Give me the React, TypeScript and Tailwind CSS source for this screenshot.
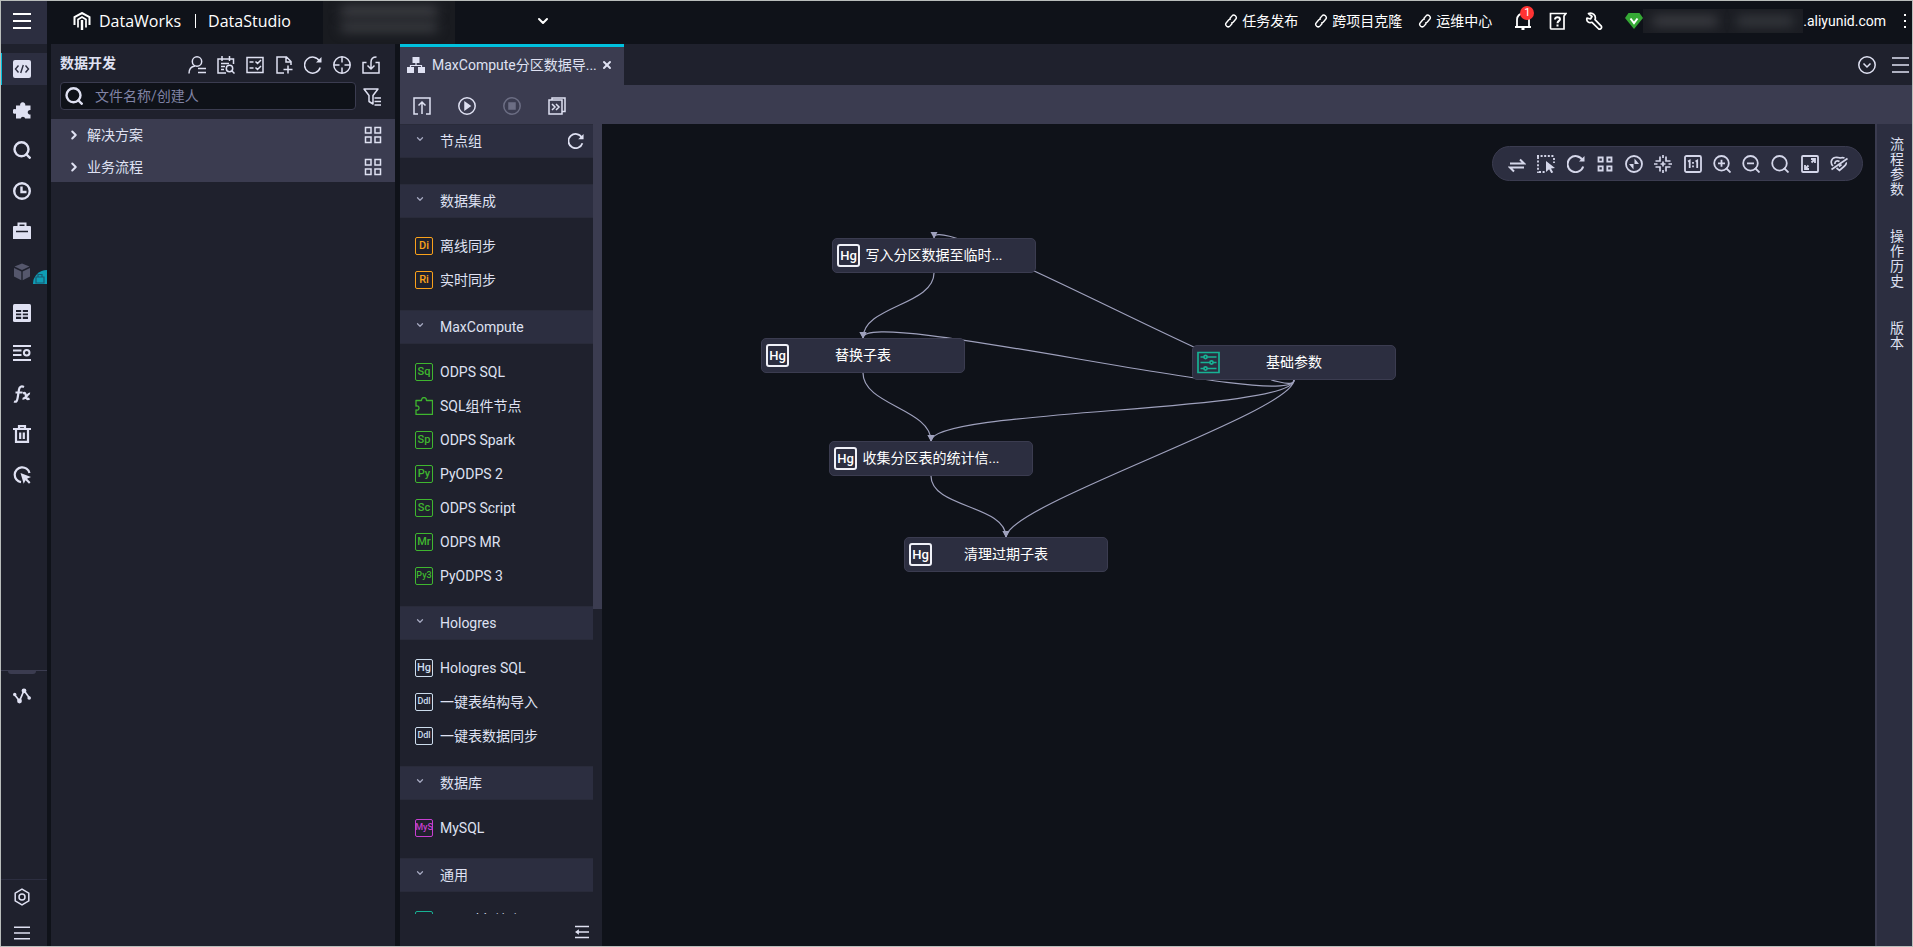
import type { ReactNode } from 'react';
import { ChevronDown, ChevronRight, X } from 'lucide-react';

interface IconProps {
  children: ReactNode;
  className?: string;
  weight?: number;
}

function Icon({ children, className = 'w-[18px] h-[18px]', weight = 1.5 }: IconProps) {
  return (
    <svg viewBox="0 0 18 18" fill="none" stroke="currentColor" strokeWidth={weight} className={`shrink-0 ${className}`} aria-hidden="true">
      {children}
    </svg>
  );
}

/* ---------- shared glyphs ---------- */

const GridIcon = () => (
  <Icon>
    <path d="M1.5 1.5h5.5v5.5h-5.5zM11 1.5h5.5v5.5h-5.5zM1.5 11h5.5v5.5h-5.5zM11 11h5.5v5.5h-5.5z" />
  </Icon>
);

const RefreshIcon = ({ weight = 1.5 }: { weight?: number }) => (
  <Icon weight={weight}>
    <path d="M16.2 11.5a8 8 0 1 1-.6-6.2" />
    <path d="M17.5 1v5.500h-5.500z" fill="currentColor" stroke="none" />
  </Icon>
);

const BarsIcon = ({ weight = 1.5 }: { weight?: number }) => (
  <Icon weight={weight}>
    <path d="M0 2h18M0 9h18M0 16h18" />
  </Icon>
);

const SearchIcon = () => (
  <Icon weight={2.4}>
    <circle cx="8.5" cy="8.3" r="7" />
    <path d="M12.5 12.5l5 5" />
  </Icon>
);

const LinkIcon = () => (
  <Icon className="w-[14px] h-[14px]" weight={1.8}>
    <g transform="rotate(-50 9 9)">
      <path d="M8 12.200H3.500a3.200 3.200 0 0 1 0-6.400H8a3.200 3.200 0 0 1 2.800 1.700" />
      <path d="M10 5.800h4.500a3.200 3.200 0 0 1 0 6.400H10a3.200 3.200 0 0 1-2.800-1.700" />
    </g>
  </Icon>
);

/* ---------- left rail ---------- */

const RAIL_ITEMS = [
  {
    name: '数据开发',
    icon: (
      <Icon weight={1.4}>
        <rect width="18" height="18" rx="2" fill="currentColor" stroke="none" />
        <path d="M5.500 5.500L2.500 9l3 3.500M12.500 5.500l3 3.500-3 3.500M10.300 5l-2.600 8" stroke="#2c2e40" />
      </Icon>
    ),
  },
  {
    name: '组件管理',
    icon: (
      <Icon>
        <path d="M3 4.500h4.200a2.600 2.600 0 1 1 5 0h5.300v4.500a2.300 2.300 0 1 0 0 4.500v4h-5.300a2.300 2.300 0 0 0-4.500 0H3v-5a2.400 2.400 0 1 1 0-4.200z" fill="currentColor" stroke="none" />
      </Icon>
    ),
  },
  { name: '查询', icon: <SearchIcon /> },
  {
    name: '运行历史',
    icon: (
      <Icon weight={2.400}>
        <circle cx="9" cy="9" r="7.800" />
        <path d="M8.500 4.500v5.500h5" />
      </Icon>
    ),
  },
  {
    name: '手动业务流程',
    icon: (
      <Icon>
        <path d="M5.500 4v-2.500h7v2.500" strokeWidth="2" />
        <path d="M1 4h16a1 1 0 0 1 1 1v12H0V5a1 1 0 0 1 1-1z" fill="currentColor" stroke="none" />
        <path d="M3 9.500h12" stroke="#1f212d" strokeWidth="1.500" />
      </Icon>
    ),
  },
  {
    name: '公共表',
    locked: true,
    icon: (
      <Icon className="w-[18px] h-[18px] text-[#55576c]">
        <path d="M9 0.500l7.500 3L9 7 1.500 3.500zM1 5l7.300 3.400v8.800L1 13.500zM17 5L9.700 8.400v8.800L17 13.500z" fill="currentColor" stroke="none" />
      </Icon>
    ),
  },
  {
    name: '表管理',
    icon: (
      <Icon>
        <rect width="18" height="18" rx="1.500" fill="currentColor" stroke="none" />
        <path d="M3 6h12v9H3z" fill="#1f212d" stroke="none" />
        <path d="M3 8.700h12M3 12h12M9 6v9" strokeWidth="1.600" />
      </Icon>
    ),
  },
  {
    name: '函数列表',
    icon: (
      <Icon weight={2}>
        <path d="M0 2h18M0 6.500h8.500M0 11h8.500M0 16h18" />
        <circle cx="13.700" cy="8.800" r="2.800" />
      </Icon>
    ),
  },
  {
    name: '函数',
    icon: (
      <Icon weight={2.200}>
        <path d="M1 16.500c2.500 1 3.200-1 3.700-4L6 4.500c.5-3 2.500-3.700 5-2.500M2.500 7.500h7" />
        <path d="M10 8.500c2-1.500 2.500 0 3 2.500s1 4 3.500 2.500M17 8.500c-2.500-.5-4 6-7.500 5" />
      </Icon>
    ),
  },
  {
    name: '回收站',
    icon: (
      <Icon weight={2.200}>
        <path d="M0 4h18M6 3V1.200h6V3" />
        <path d="M3 5v11.800h12V5M7.200 7.500v6.500M10.800 7.500v6.500" />
      </Icon>
    ),
  },
  {
    name: '诊断',
    icon: (
      <Icon weight={2.200}>
        <path d="M8 16.200A7.500 7.500 0 1 1 16.500 7" />
        <path d="M7.500 7l10.500 4-4 1.800 3.500 3.500-1.500 1.500-3.500-3.500-1.800 3.500z" fill="currentColor" stroke="none" />
      </Icon>
    ),
  },
];

function Rail() {
  return (
    <nav className="w-[46px] shrink-0 flex flex-col bg-[#1f212d] text-[#dfe1f2]">
      <div className="grid grid-rows-11 h-[446px] mt-[5px] items-center">
        {RAIL_ITEMS.map((item, i) => (
          <button
            key={item.name}
            aria-label={item.name}
            className={`relative h-8 pr-[5px] flex items-center justify-center border-l ${i === 0 ? 'bg-[#2c2e40] border-[#00c1de]' : 'border-transparent'}`}
          >
            {item.icon}
            {item.locked && (
              <span className="absolute right-0 bottom-1 w-[14px] h-[14px] rounded-tl-full bg-[#0e9db5] flex items-end justify-center">
                <svg viewBox="0 0 12 12" className="w-3 h-3" fill="none" stroke="#1b5c74" strokeWidth="1.200">
                  <path d="M2 5h8v6H2zM4 5V2.500h4V5" />
                </svg>
              </span>
            )}
          </button>
        ))}
      </div>

      <div className="flex-1" />
      <div className="border-t border-[#3b3c50] h-[209px] flex flex-col">
        <div className="ml-[7px] w-7 h-[3px] rounded-b bg-[#3b3c50]" />
        <button aria-label="血缘" className="pt-[13px] pr-1 self-center">
          <Icon weight={1.700}>
            <path d="M1.500 7.500l5 6.500L11 3.500l5.500 7.500" />
            <circle cx="1.700" cy="7.500" r="1.700" fill="currentColor" stroke="none" />
            <circle cx="6.500" cy="14" r="2.400" fill="currentColor" stroke="none" />
            <circle cx="11" cy="3.800" r="2.400" fill="currentColor" stroke="none" />
            <circle cx="16.200" cy="11" r="1.800" fill="currentColor" stroke="none" />
          </Icon>
        </button>
      </div>
      <div className="border-t border-[#2c2e40] h-[67px] pt-2 pr-1 flex flex-col items-center gap-[18px]">
        <button aria-label="设置">
          <Icon>
            <path d="M9 1.200l6.800 3.900v7.800L9 16.800l-6.800-3.900V5.100z" />
            <circle cx="9" cy="9" r="3" />
          </Icon>
        </button>
        <button aria-label="菜单">
          <Icon className="w-4 h-[18px]">
            <path d="M0 2.500h18M0 9h18M0 15.500h18" />
          </Icon>
        </button>
      </div>
    </nav>
  );
}

/* ---------- header ---------- */

function Header() {
  return (
    <header className="h-[43px] shrink-0 flex items-center text-white">
      <button aria-label="全部产品" className="w-[46px] h-full bg-[#2c2e40] flex items-center justify-center pr-1 pb-[3px]">
        <BarsIcon weight={2} />
      </button>
      <div className="pb-1 pl-[26px] flex items-center text-base font-['Open_Sans','Noto_Sans_CJK_SC',sans-serif]">
        <svg viewBox="0 0 18 18" className="w-[18px] h-[18px]" fill="none" stroke="currentColor" strokeWidth="2">
          <path d="M1.500 13V5L9 1l7.500 4v8" />
          <path d="M5 15.500V7.500L9 5l4 2.500v8" strokeWidth="1.700" />
          <path d="M9 8v10" strokeWidth="2.400" />
        </svg>
        <a href="#" className="ml-2">DataWorks</a>
        <span className="ml-[14px] w-px h-[14px] bg-white" />
        <a href="#" className="ml-3">DataStudio</a>
      </div>
      <div className="ml-8 w-[132px] h-full overflow-hidden bg-[#191b20] flex flex-col items-center justify-center gap-2 pb-2">
        <div className="w-24 h-2 bg-[#4a4b50] blur-[6px]" />
        <div className="w-24 h-2 bg-[#43454a] blur-[6px]" />
      </div>
      <button aria-label="切换工作空间" className="ml-20 pb-1">
        <ChevronDown className="w-4 h-4" strokeWidth={3} />
      </button>

      <div className="ml-auto pb-1 pr-[2px] flex items-center text-sm">
        <a href="#" className="flex items-center gap-1"><LinkIcon />任务发布</a>
        <a href="#" className="ml-4 flex items-center gap-1"><LinkIcon />跨项目克隆</a>
        <a href="#" className="ml-4 flex items-center gap-1"><LinkIcon />运维中心</a>
        <button aria-label="通知" className="relative ml-[22px]">
          <Icon weight={1.800}>
            <path d="M1 15h16M3 15V7.500a6 6 0 0 1 12 0V15M7.500 17h3" />
          </Icon>
          <span className="absolute -top-[6px] left-[6px] w-[14px] h-[14px] rounded-full bg-[#ff3333] text-[11px] leading-[14px] text-center">1</span>
        </button>
        <button aria-label="帮助" className="ml-[17px]">
          <Icon weight={1.700}>
            <path d="M1.500 1.500h15.500l-2 2.500v13H2.500a1 1 0 0 1-1-1z" />
            <path d="M6 7.500c0-3 5-3 5-.3 0 1.800-2.500 1.600-2.500 4M8.500 12.500v2" strokeWidth="2" />
          </Icon>
        </button>
        <button aria-label="工具" className="ml-[18px]">
          <Icon weight={1.700}>
            <path d="M3.500 1.500L7 4.500l-1.500 2.500L2 6C1 9.500 4 11.500 7 10.300l6.700 6.700c1.500.8 3.600-1 2.600-2.800L10 7.600C11.500 3.500 7.500-.2 3.500 1.500z" strokeLinejoin="round" />
          </Icon>
        </button>
        <svg viewBox="0 0 18 18" className="ml-[22px] w-[18px] h-[18px]">
          <path d="M3.500 1h11L18 6 9 17 0 6z" fill="#35a835" />
          <path d="M5.500 6.500L9 11l3.500-4.500" fill="none" stroke="#fff" strokeWidth="2" />
        </svg>
        <div className="w-[160px] h-6 overflow-hidden bg-[#1b1d23] flex items-center justify-around">
          <div className="w-16 h-2 bg-[#46474c] blur-[6px]" />
          <div className="w-14 h-2 bg-[#3d4045] blur-[6px]" />
        </div>
        <a href="#">.aliyunid.com</a>
        <button aria-label="更多" className="ml-[14px] w-[10px] flex justify-center">
          <svg viewBox="0 0 4 18" className="w-1 h-[18px]" fill="currentColor">
            <rect x="1" y="2" width="2" height="2" />
            <rect x="1" y="8" width="2" height="2" />
            <rect x="1" y="14" width="2" height="2" />
          </svg>
        </button>
      </div>
    </header>
  );
}

/* ---------- file panel ---------- */

const FILE_ACTIONS = [
  {
    name: '我的文件',
    icon: (
      <Icon>
        <circle cx="9" cy="5.500" r="4.700" />
        <path d="M1 17.500c0-5 2.500-7 6-7.500M10 12.500h8M10 16.500h8" />
      </Icon>
    ),
  },
  {
    name: '查找代码',
    icon: (
      <Icon>
        <path d="M9 17H1V3h15.500v5M5 0v5M12.500 0v5M4 7.500h8M4 10.500h4M4 13.500h3" />
        <circle cx="12.500" cy="12.500" r="3.200" />
        <path d="M15 15l2.500 2.500" />
      </Icon>
    ),
  },
  {
    name: '批量操作',
    icon: (
      <Icon>
        <path d="M1 1.500h16v15H1z" />
        <path d="M3.500 6h4M3.500 12h4M9.500 5.500l2 2 3.500-3.500M9.500 11.500l2 2 3.500-3.500" />
      </Icon>
    ),
  },
  {
    name: '新建',
    icon: (
      <Icon>
        <path d="M9 17H2V1h9.500l4.500 4.500V9M11 1v5h5M8.500 13.500h9M13 9.500v8" />
      </Icon>
    ),
  },
  { name: '刷新', icon: <RefreshIcon /> },
  {
    name: '定位',
    icon: (
      <Icon>
        <circle cx="9" cy="9" r="8.200" />
        <path d="M9 1v5.500M9 11.500V17M1 9h5.500M11.500 9H17" />
      </Icon>
    ),
  },
  {
    name: '导入',
    icon: (
      <Icon>
        <path d="M4.500 6.500H1V17h16V6.500h-3.500" />
        <path d="M14.500 1C10.500 1 9 3 9 6v6.500M5.500 9.500L9 13l3.500-3.500" />
      </Icon>
    ),
  },
];

function FilePanel() {
  return (
    <aside className="w-[344px] shrink-0 bg-[#1f212d]">
      <div className="h-[38px] pt-1 pl-[9px] pr-[15px] flex items-center justify-between">
        <h2 className="pb-1 text-sm font-bold">数据开发</h2>
        <div className="flex gap-[11px]">
          {FILE_ACTIONS.map((a) => (
            <button key={a.name} aria-label={a.name}>{a.icon}</button>
          ))}
        </div>
      </div>
      <div className="pl-[9px] pr-[14px] h-[37px] flex items-start gap-[7px]">
        <label className="flex-1 h-7 flex items-center gap-3 pl-1 bg-[#0f1219] border border-[#3b3c50] rounded-sm">
          <SearchIcon />
          <input
            type="text"
            aria-label="文件名称/创建人"
            placeholder="文件名称/创建人"
            className="w-full bg-transparent outline-none text-sm placeholder:text-[#8083a5]"
          />
        </label>
        <button aria-label="筛选" className="mt-[6px]">
          <Icon>
            <path d="M1 1h14l-5 6.500V16l-4-2.500v-6z" strokeLinejoin="round" />
            <path d="M11.500 10H18M11.500 13.500H18M11.500 17H18" />
          </Icon>
        </button>
      </div>
      <ul className="bg-[#3b3c50] h-[63px]">
        {['解决方案', '业务流程'].map((name) => (
          <li key={name} className="h-8 pb-px pl-4 pr-[13px] flex items-center">
            <ChevronRight className="w-[14px] h-[14px]" strokeWidth={3.500} />
            <span className="ml-[6px] flex-1 text-sm">{name}</span>
            <button aria-label={`${name}看板`}><GridIcon /></button>
          </li>
        ))}
      </ul>
    </aside>
  );
}

/* ---------- node palette ---------- */

interface PaletteItem {
  tag: string;
  label: string;
}

const PALETTE: { title: string; tone: string; items: PaletteItem[] }[] = [
  {
    title: '数据集成',
    tone: 'text-[#f9a11b]',
    items: [
      { tag: 'Di', label: '离线同步' },
      { tag: 'Ri', label: '实时同步' },
    ],
  },
  {
    title: 'MaxCompute',
    tone: 'text-[#3fb62f]',
    items: [
      { tag: 'Sq', label: 'ODPS SQL' },
      { tag: '', label: 'SQL组件节点' },
      { tag: 'Sp', label: 'ODPS Spark' },
      { tag: 'Py', label: 'PyODPS 2' },
      { tag: 'Sc', label: 'ODPS Script' },
      { tag: 'Mr', label: 'ODPS MR' },
      { tag: 'Py3', label: 'PyODPS 3' },
    ],
  },
  {
    title: 'Hologres',
    tone: 'text-[#ccdcec]',
    items: [
      { tag: 'Hg', label: 'Hologres SQL' },
      { tag: 'Ddl', label: '一键表结构导入' },
      { tag: 'Ddl', label: '一键表数据同步' },
    ],
  },
  { title: '数据库', tone: 'text-[#c63fd0]', items: [{ tag: 'MyS', label: 'MySQL' }] },
  { title: '通用', tone: 'text-[#17b294]', items: [{ tag: 'Oss', label: 'OSS对象检查' }] },
];

function SectionTitle({ title, children }: { title: string; children?: ReactNode }) {
  return (
    <div className="h-[34px] pl-[15px] pr-[9px] flex items-center bg-[#2c2e40] border-y border-[#292b3a]">
      <ChevronDown className="w-[10px] h-[10px] mb-1 text-[#a5a8c0]" strokeWidth={3} />
      <h3 className="ml-[15px] flex-1 text-sm">{title}</h3>
      {children}
    </div>
  );
}

function NodePalette() {
  return (
    <aside className="relative w-[202px] shrink-0 flex flex-col bg-[#1f212d]">
      <div className="flex-1 min-h-0 w-[193px] overflow-hidden">
        <SectionTitle title="节点组">
          <button aria-label="刷新节点组">
            <Icon weight={2} className="w-4 h-4">
              <path d="M16.200 11.500a8 8 0 1 1-.6-6.200" />
              <path d="M17.500 1v6h-6z" fill="currentColor" stroke="none" />
            </Icon>
          </button>
        </SectionTitle>
        <div className="h-[26px]" />
        {PALETTE.map((group) => (
          <section key={group.title}>
            <SectionTitle title={group.title} />
            <ul className="pt-[11px] pb-[13px]">
              {group.items.map((item) => (
                <li key={item.label} className="h-[34px] pl-[15px] flex items-center gap-[7px]">
                  {item.tag ? (
                    <span className={`w-[18px] h-[18px] shrink-0 border rounded-xs flex items-center justify-center overflow-hidden font-medium ${item.tag.length > 2 ? 'text-[9px]' : 'text-[11px]'} ${group.tone}`}>
                      {item.tag}
                    </span>
                  ) : (
                    <Icon weight={1.300} className="w-[18px] h-[18px] text-[#3fb62f]">
                      <path d="M1 3.500h5.500c0-4 5-4 5 0h6v14H1v-4.500c4 1 4-5 0-4z" strokeLinejoin="round" />
                    </Icon>
                  )}
                  <span className="text-sm whitespace-nowrap">{item.label}</span>
                </li>
              ))}
            </ul>
          </section>
        ))}
      </div>
      <div className="h-8 shrink-0 pt-1 pr-[13px] flex items-center justify-end">
        <button aria-label="收起">
          <Icon weight={2} className="w-[14px] h-[14px]">
            <path d="M0 2h18M4 9h14M0 16h18" />
            <path d="M5 5.500v7L0 9z" fill="currentColor" stroke="none" />
          </Icon>
        </button>
      </div>
      <div className="absolute right-0 top-0 w-[9px] h-[59%] bg-[#3b3c50]" />
    </aside>
  );
}

/* ---------- flow canvas ---------- */

const NODE_W = 204;
const NODE_H = 35;

const NODES = [
  { id: 'write', x: 230, y: 114, label: '写入分区数据至临时...', kind: 'hg' },
  { id: 'replace', x: 159, y: 214, label: '替换子表', kind: 'hg' },
  { id: 'params', x: 590, y: 221, label: '基础参数', kind: 'params' },
  { id: 'stats', x: 227, y: 317, label: '收集分区表的统计信...', kind: 'hg' },
  { id: 'clean', x: 302, y: 413, label: '清理过期子表', kind: 'hg' },
];

const EDGES = [
  ['write', 'replace'],
  ['replace', 'stats'],
  ['stats', 'clean'],
  ['params', 'write'],
  ['params', 'replace'],
  ['params', 'stats'],
  ['params', 'clean'],
];

function Edge({ from, to }: { from: string; to: string }) {
  const a = NODES.find((n) => n.id === from)!;
  const b = NODES.find((n) => n.id === to)!;
  const x1 = a.x + NODE_W / 2;
  const y1 = a.y + NODE_H;
  const x2 = b.x + NODE_W / 2;
  const y2 = b.y;
  return (
    <>
      <path d={`M${x1} ${y1}C${x1} ${y1 + 32} ${x2} ${y2 - 32} ${x2} ${y2}`} fill="none" stroke="#9fa1bd" strokeWidth="1.200" />
      <path d={`M${x2 - 3.5} ${y2 - 6}h7l-3.500 6.500z`} fill="#9fa1bd" />
    </>
  );
}

const CANVAS_TOOLS = [
  {
    name: '切换方向',
    icon: <Icon weight={2}><path d="M2 8.500h14l-4-4M16 12.500H2l4 4" /></Icon>,
  },
  {
    name: '框选',
    icon: (
      <Icon weight={1.800}>
        <path d="M0 1h18M1 2v16M17 3v5M2 17h7" strokeDasharray="2 1.600" />
        <path d="M9 6l9 7-4 .5 2.200 3.700-1.900 1-2.200-3.900-3.100 2.700z" fill="currentColor" stroke="none" />
      </Icon>
    ),
  },
  { name: '刷新', icon: <RefreshIcon weight={2} /> },
  {
    name: '自动布局',
    icon: (
      <Icon weight={1.800}>
        <path d="M2.500 2.500h4.200v4.200h-4.200zM11.300 2.500h4.200v4.200h-4.200zM2.500 11.300h4.200v4.200h-4.200zM11.300 11.300h4.200v4.200h-4.200z" />
      </Icon>
    ),
  },
  {
    name: '定位',
    icon: (
      <Icon weight={1.800}>
        <circle cx="9" cy="9" r="8" />
        <path d="M9.500 3.500l4.500 5.500H9.500zM8.500 14.500L4 9h4.500z" fill="currentColor" stroke="none" />
      </Icon>
    ),
  },
  {
    name: '收拢',
    icon: (
      <Icon weight={1.700}>
        <path d="M1.500 6h4.500V1.500M16.500 6H12V1.500M1.500 12h4.500v4.500M16.500 12H12v4.500" />
        <path d="M9 6.500v5M6.500 9h5M0 9h3.500M14.500 9H18M9 0v3M9 15v3" />
      </Icon>
    ),
  },
  {
    name: '1:1',
    icon: (
      <Icon weight={1.800}>
        <rect x="1" y="1" width="16" height="16" rx="1.500" />
        <path d="M4 6.500l1.700-1V13M11.500 6.500l1.700-1V13M9 7v1.800M9 10.500v1.800" />
      </Icon>
    ),
  },
  {
    name: '放大',
    icon: (
      <Icon weight={1.800}>
        <circle cx="8.500" cy="8.300" r="7.300" />
        <path d="M13 13l4.500 4.500M5 8.300h7M8.500 4.800v7" />
      </Icon>
    ),
  },
  {
    name: '缩小',
    icon: (
      <Icon weight={1.800}>
        <circle cx="8.500" cy="8.300" r="7.300" />
        <path d="M13 13l4.500 4.500M5 8.300h7" />
      </Icon>
    ),
  },
  {
    name: '搜索',
    icon: (
      <Icon weight={1.800}>
        <circle cx="8.500" cy="8.300" r="7.300" />
        <path d="M13 13l4.500 4.500" />
      </Icon>
    ),
  },
  {
    name: '全屏',
    icon: (
      <Icon weight={1.800}>
        <rect x="1" y="1" width="16" height="16" rx="1" />
        <path d="M10 4h4v4M8 14H4v-4M14 4l-3.500 3.500M4 14l3.500-3.500" />
      </Icon>
    ),
  },
  {
    name: '隐藏',
    icon: (
      <Icon weight={1.700}>
        <path d="M1.500 14.500L17.500 3.500" />
        <path d="M3 11C0 8 1 3.500 5 2.500c2.500-.6 3.500 0 5 .5 1.500-.5 3-.7 4.500 0M5 9c-.500-2.500 2-4 4.500-2.500M16 7.500c.5 1-.3 2.500-1.500 3.500L9.500 15.500 6.500 13M9 11.500l2.500-2" />
      </Icon>
    ),
  },
];

function FlowCanvas() {
  return (
    <main className="relative flex-1 overflow-hidden bg-[#0f1219]">
      <svg className="absolute inset-0 w-full h-full" aria-hidden="true">
        {EDGES.map(([from, to]) => (
          <Edge key={from + to} from={from} to={to} />
        ))}
      </svg>
      {NODES.map((node) => (
        <div
          key={node.id}
          className="absolute w-[204px] h-[35px] flex items-center rounded-[5px] bg-[#2c2e40] border border-[#3b3c50]"
          style={{ left: node.x, top: node.y }}
        >
          {node.kind === 'hg' ? (
            <span className="absolute left-1 w-[23px] h-[23px] border-2 border-[#f0f1f8] rounded-[3px] flex items-center justify-center text-[13px] text-white font-medium">Hg</span>
          ) : (
            <svg viewBox="0 0 23 23" className="absolute left-1 w-[23px] h-[23px]" fill="none" stroke="#17b294" strokeWidth="1.700">
              <path d="M1 1.500h21v20H1z" />
              <path d="M3.500 6h4M10 6h9.500M3.500 11.500h9.500M16 11.500h3.500M3.500 17.500h4M10 17.500h9.500" />
              <circle cx="8.500" cy="6" r="1.600" />
              <circle cx="14.500" cy="11.500" r="1.600" />
              <circle cx="8.500" cy="17.500" r="1.600" />
            </svg>
          )}
          <span className="flex-1 text-center text-sm whitespace-nowrap text-white pb-[2px]">{node.label}</span>
        </div>
      ))}

      <div className="absolute right-3 top-[22px] w-[371px] h-[35px] pl-[15px] pr-[14px] flex items-center justify-between rounded-full bg-[#2c2e40] border border-[#3b3c50] text-[#d5d7ea]">
        {CANVAS_TOOLS.map((tool) => (
          <button key={tool.name} aria-label={tool.name}>{tool.icon}</button>
        ))}
      </div>
    </main>
  );
}

/* ---------- workspace ---------- */

function Workspace() {
  return (
    <div className="flex-1 min-w-0 flex flex-col">
      <div className="h-[41px] shrink-0 flex bg-[#1f212d]">
        <div className="w-56 pl-[7px] pr-[11px] pb-[2px] flex items-center border-t-3 border-[#00c1de] bg-[#3b3c50]">
          <Icon>
            <path d="M5.500 1h7v6h-7zM0 11h7v6H0zM11 11h7v6h-7z" fill="currentColor" stroke="none" />
            <path d="M9 7v2.500M3.500 11V9.500h11V11" strokeWidth="1.200" />
          </Icon>
          <span className="ml-[7px] flex-1 text-sm whitespace-nowrap">MaxCompute分区数据导...</span>
          <button aria-label="关闭标签"><X className="w-3 h-3" strokeWidth={4} /></button>
        </div>
        <div className="ml-auto pr-[2px] flex items-center gap-4">
          <button aria-label="标签列表">
            <Icon>
              <circle cx="9" cy="9" r="8.200" />
              <path d="M5.500 7.500L9 11l3.500-3.500" />
            </Icon>
          </button>
          <button aria-label="更多操作">
            <Icon>
              <path d="M0 2h17M0 9h17M0 16h17" />
            </Icon>
          </button>
        </div>
      </div>

      <div className="h-[39px] shrink-0 pl-[13px] pb-1 pt-[7px] flex items-center gap-[27px] bg-[#3b3c50]">
        <button aria-label="提交">
          <Icon>
            <path d="M5 17H1V1h16v16h-4M9 17V5M5.500 8.500L9 5l3.500 3.500" />
          </Icon>
        </button>
        <button aria-label="运行">
          <Icon>
            <circle cx="9" cy="9" r="8.200" />
            <path d="M7 5.500v7l5-3.500z" fill="currentColor" />
          </Icon>
        </button>
        <button aria-label="停止" disabled className="text-[#6c6e84]">
          <Icon>
            <circle cx="9" cy="9" r="8.200" />
            <path d="M6 6h6v6H6z" fill="currentColor" />
          </Icon>
        </button>
        <button aria-label="发布">
          <Icon>
            <path d="M1 3h13v14H1zM4 3V1h13v13.500h-3M4 7l3 3-3 3M8 7l3 3-3 3" />
          </Icon>
        </button>
      </div>

      <div className="flex-1 min-h-0 flex">
        <NodePalette />
        <FlowCanvas />
        <div className="w-[37px] shrink-0 pt-[13px] pl-[13px] flex flex-col gap-8 bg-[#2c2e40] border-l-2 border-[#3b3c50]">
          {['流程参数', '操作历史', '版本'].map((name) => (
            <button key={name} className="w-[14px] text-sm leading-[15px] break-all">{name}</button>
          ))}
        </div>
      </div>
    </div>
  );
}

export default function App() {
  return (
    <div className="h-screen flex flex-col overflow-hidden border border-[#b9bdbb] bg-[#0f1219] text-[#dfe1f2] font-[Roboto,'Noto_Sans_CJK_SC',sans-serif]">
      <Header />
      <div className="flex-1 min-h-0 flex">
        <Rail />
        <div className="w-1 shrink-0" />
        <FilePanel />
        <div className="w-[5px] shrink-0" />
        <Workspace />
      </div>
    </div>
  );
}
